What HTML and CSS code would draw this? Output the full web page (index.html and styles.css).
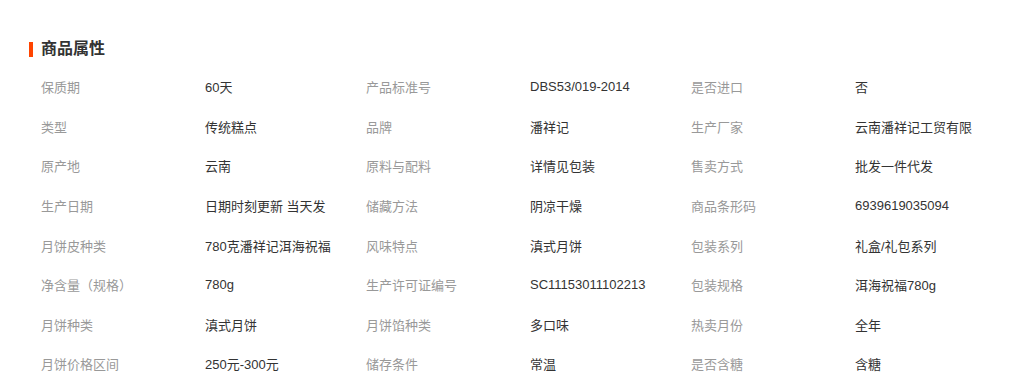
FILE: index.html
```html
<!DOCTYPE html>
<html lang="zh">
<head>
<meta charset="utf-8">
<link rel="stylesheet" href="styles.css">
</head>
<body>
<div class="attrs">
  <div class="title"><span class="bar"></span><span class="title-text">商品属性</span></div>
  <div class="grid">
    <div class="k">保质期</div><div class="v">60天</div>
    <div class="k">产品标准号</div><div class="v">DBS53/019-2014</div>
    <div class="k">是否进口</div><div class="v">否</div>

    <div class="k">类型</div><div class="v">传统糕点</div>
    <div class="k">品牌</div><div class="v">潘祥记</div>
    <div class="k">生产厂家</div><div class="v">云南潘祥记工贸有限</div>

    <div class="k">原产地</div><div class="v">云南</div>
    <div class="k">原料与配料</div><div class="v">详情见包装</div>
    <div class="k">售卖方式</div><div class="v">批发一件代发</div>

    <div class="k">生产日期</div><div class="v">日期时刻更新 当天发</div>
    <div class="k">储藏方法</div><div class="v">阴凉干燥</div>
    <div class="k">商品条形码</div><div class="v">6939619035094</div>

    <div class="k">月饼皮种类</div><div class="v">780克潘祥记洱海祝福</div>
    <div class="k">风味特点</div><div class="v">滇式月饼</div>
    <div class="k">包装系列</div><div class="v">礼盒/礼包系列</div>

    <div class="k">净含量（规格）</div><div class="v">780g</div>
    <div class="k">生产许可证编号</div><div class="v">SC11153011102213</div>
    <div class="k">包装规格</div><div class="v">洱海祝福780g</div>

    <div class="k">月饼种类</div><div class="v">滇式月饼</div>
    <div class="k">月饼馅种类</div><div class="v">多口味</div>
    <div class="k">热卖月份</div><div class="v">全年</div>

    <div class="k">月饼价格区间</div><div class="v">250元-300元</div>
    <div class="k">储存条件</div><div class="v">常温</div>
    <div class="k">是否含糖</div><div class="v">含糖</div>
  </div>
</div>
</body>
</html>
```

FILE: styles.css
```css
html, body {
  margin: 0;
  padding: 0;
  background: #fff;
}
body {
  font-family: "Liberation Sans", "Noto Sans CJK SC", sans-serif;
  font-size: 13px;
  color: #333;
}
.attrs {
  padding: 39px 0 0 29px;
}
.title {
  display: flex;
  align-items: center;
  height: 20px;
}
.bar {
  width: 4px;
  height: 15px;
  background: #ff4400;
  margin-right: 8px;
}
.title-text {
  font-size: 16px;
  font-weight: bold;
  color: #333;
  line-height: 20px;
}
.grid {
  margin-top: 8px;
  margin-left: 12px;
  display: grid;
  grid-template-columns: 164px 161px 164px 161px 164px 161px;
  grid-auto-rows: 39.57px;
  align-items: center;
}
.k {
  color: #999;
  white-space: nowrap;
}
.v {
  color: #333;
  white-space: nowrap;
}
```
